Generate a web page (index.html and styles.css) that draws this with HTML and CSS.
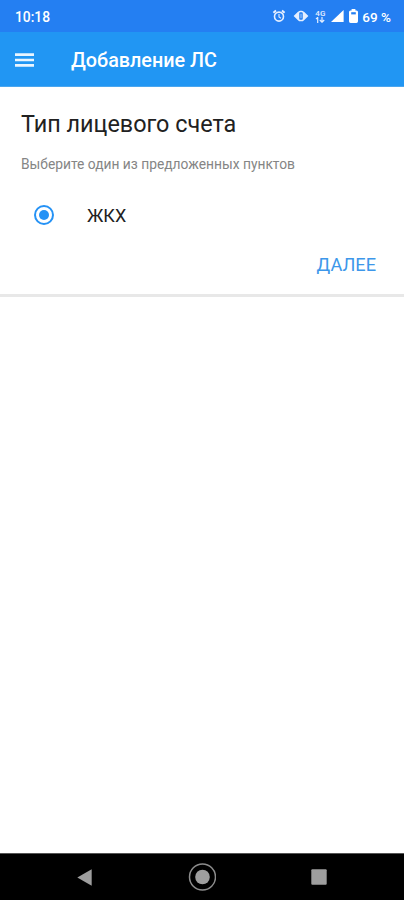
FILE: index.html
```html
<!DOCTYPE html>
<html lang="ru">
<head>
  <meta charset="UTF-8">
  <title>Добавление ЛС</title>
  <meta name="viewport" content="width=device-width, initial-scale=1.0">
  <link rel="stylesheet" href="styles.css">
</head>
<body>
  <div class="status-bar">
    <span class="time">10:18</span>
    <div class="status-icons">
      <!-- alarm -->
      <svg class="icon-alarm" width="14" height="14" viewBox="0 0 14 14" fill="none" stroke="#e4eeff">
        <circle cx="7" cy="7.6" r="4.5" stroke-width="1.6"/>
        <path d="M1.4 3.8 4 1.6M12.6 3.8 10 1.6" stroke-width="2"/>
        <path d="M7 5v3l2 1.2" stroke-width="1.1"/>
      </svg>
      <!-- vibrate -->
      <svg class="icon-vibrate" width="16" height="12" viewBox="0 0 16 12">
        <path d="M5 1.8v8.4L.6 6zM11 1.8v8.4L15.4 6z" fill="#e4eeff"/>
        <rect x="5.5" y="1.4" width="5" height="9.2" rx="1.8" fill="#247ff2" stroke="#e4eeff" stroke-width="1.5"/>
        <path d="M8 3.8v4.4" stroke="#a9ccfb" stroke-width="1"/>
      </svg>
      <div class="network">
        <span>4G</span>
        <svg width="10" height="6" viewBox="0 0 10 6" fill="none" stroke="#e4eeff">
          <path d="M2.7 6V.5L1 2M7 0v5.4M4.8 3 7 5.2 9.2 3" stroke-width="1.2"/>
        </svg>
      </div>
      <!-- signal -->
      <svg class="icon-signal" width="13" height="12" viewBox="0 0 13 12">
        <path d="M12.6 0v12H0z" fill="#fff"/>
      </svg>
      <!-- battery -->
      <svg class="icon-battery" width="9" height="14" viewBox="0 0 9 14">
        <path d="M2.6 0h3.8v1.4H7.5Q9 1.4 9 3v9.2Q9 14 7.4 14H1.6Q0 14 0 12.2V3q0-1.6 1.5-1.6h1.1z" fill="#fff"/>
        <path d="M2.2 3.2h4.6v2.2H2.2z" fill="#247ff2"/>
      </svg>
      <span class="percent">69 %</span>
    </div>
  </div>

  <div class="toolbar">
    <svg class="menu" width="19" height="14" viewBox="0 0 19 14">
      <path d="M0 1.7h19M0 7h19M0 12.3h19" stroke="#e9f5ff" stroke-width="2.7"/>
    </svg>
    <h1>Добавление ЛС</h1>
  </div>

  <div class="card">
    <h2>Тип лицевого счета</h2>
    <p class="hint">Выберите один из предложенных пунктов</p>
    <div class="option">
      <span class="radio"></span>
      <span class="option-label">ЖКХ</span>
    </div>
    <div class="actions">
      <span class="next">ДАЛЕЕ</span>
    </div>
  </div>

  <div class="nav-bar">
    <svg width="15" height="17" viewBox="0 0 15 17">
      <path d="M14.7.3v16.4L.3 8.5z" fill="#9e9e9e"/>
    </svg>
    <svg width="28" height="28" viewBox="0 0 28 28">
      <circle cx="14.5" cy="14" r="13" fill="none" stroke="#8c8c8c" stroke-width="1.5"/>
      <circle cx="14.5" cy="14" r="7.3" fill="#9e9e9e"/>
    </svg>
    <svg width="16" height="16" viewBox="0 0 16 16">
      <rect x=".3" y=".3" width="15.4" height="15.4" rx="1" fill="#9e9e9e"/>
    </svg>
  </div>
</body>
</html>
```
FILE: styles.css
```css
html, body {
  margin: 0;
  padding: 0;
  height: 100%;
}
body {
  display: flex;
  flex-direction: column;
  background: #fff;
  color: #212121;
  font-family: Roboto, "Liberation Sans", sans-serif;
}
h1, h2, p {
  margin: 0;
}
svg {
  display: block;
  flex: none;
}
.status-bar {
  display: flex;
  align-items: center;
  justify-content: space-between;
  box-sizing: border-box;
  height: 32px;
  padding: 0 13px 0 15px;
  background: #247ff2;
  color: #fff;
}
.time {
  padding-top: 2px;
  font-size: 13.8px;
  font-weight: 500;
}
.status-icons {
  display: flex;
  align-items: center;
}
.icon-vibrate {
  margin-left: 7px;
}
.network {
  width: 11px;
  margin-left: 6px;
  color: #e4eeff;
  font-size: 8px;
  font-weight: 500;
  line-height: 7px;
}
.icon-signal {
  margin-left: 5px;
}
.icon-battery {
  margin-left: 5px;
}
.percent {
  margin-left: 4px;
  padding-top: 1px;
  font-size: 13.5px;
  font-weight: 500;
}
.toolbar {
  display: flex;
  align-items: center;
  box-sizing: border-box;
  height: 55px;
  padding: 1px 0 0 15px;
  background: #2196f3;
  border-bottom: 1px solid #4ba6ee;
}
.toolbar h1 {
  margin-left: 37px;
  padding-top: 3px;
  color: #fff;
  font-size: 19.8px;
  font-weight: 500;
  line-height: 24px;
}
.card {
  box-sizing: border-box;
  height: 210px;
  padding: 22px 21px 0;
  border-bottom: 3px solid #e8e8e8;
}
.card h2 {
  font-size: 23.4px;
  font-weight: 400;
  line-height: 30px;
}
.hint {
  margin-top: 15px;
  color: #858585;
  font-size: 13.8px;
  line-height: 20px;
}
.option {
  display: flex;
  align-items: center;
  height: 24px;
  margin-top: 29px;
  padding-left: 13px;
}
.radio {
  display: flex;
  align-items: center;
  justify-content: center;
  box-sizing: border-box;
  width: 20px;
  height: 20px;
  border: 2px solid #2592f5;
  border-radius: 50%;
}
.radio::before {
  content: "";
  width: 10px;
  height: 10px;
  border-radius: 50%;
  background: #2592f5;
}
.option-label {
  margin-left: 33px;
  font-size: 18px;
}
.actions {
  display: flex;
  justify-content: flex-end;
  margin-top: 26px;
  padding-right: 7px;
}
.next {
  color: #3d97ea;
  font-size: 18.2px;
  line-height: 24px;
}
.nav-bar {
  display: flex;
  align-items: center;
  justify-content: space-between;
  box-sizing: border-box;
  height: 47px;
  margin-top: auto;
  padding: 0 77px;
  background: #000;
  border-top: 1px solid #555;
}
```
